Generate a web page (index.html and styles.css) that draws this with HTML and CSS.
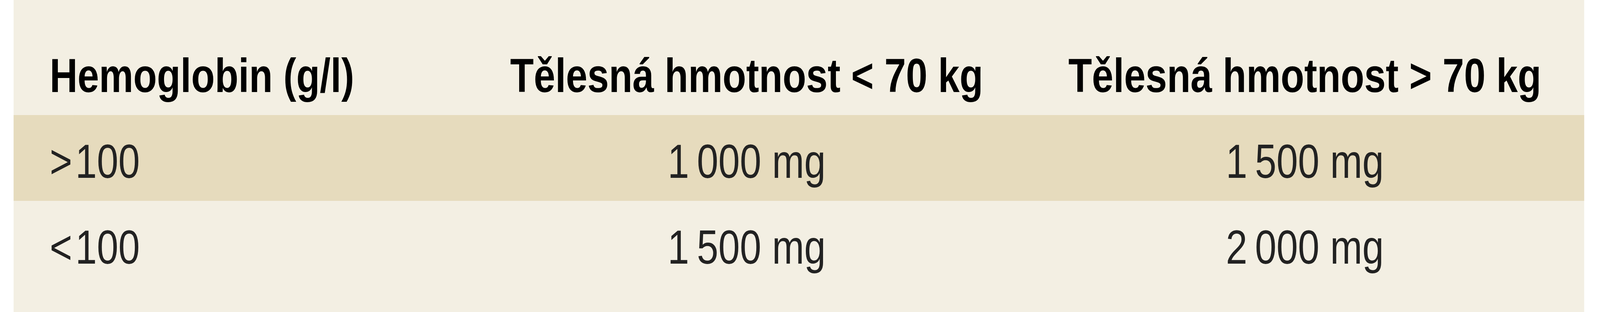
FILE: index.html
```html
<!DOCTYPE html>
<html lang="cs">
<head>
<meta charset="utf-8">
<title>Dávkování</title>
<link rel="stylesheet" href="styles.css">
</head>
<body>
<div class="frame">
  <div class="stage">
    <div class="panel">
      <div class="row head">
        <div class="cell first">Hemoglobin (g/l)</div>
        <div class="cell">Tělesná hmotnost &lt; 70 kg</div>
        <div class="cell">Tělesná hmotnost &gt; 70 kg</div>
      </div>
      <div class="row shade">
        <div class="cell first">&gt;&#8202;100</div>
        <div class="cell">1&#8201;000 mg</div>
        <div class="cell">1&#8201;500 mg</div>
      </div>
      <div class="row">
        <div class="cell first">&lt;&#8202;100</div>
        <div class="cell">1&#8201;500 mg</div>
        <div class="cell">2&#8201;000 mg</div>
      </div>
    </div>
  </div>
</div>
<script src="app.js"></script>
</body>
</html>
```
FILE: styles.css
```css
html, body {
  margin: 0;
  padding: 0;
  background: #ffffff;
  overflow: hidden;
}
body {
  font-family: "Liberation Sans", Arial, sans-serif;
}
.frame {
  width: 100%;
  height: 800px;
  overflow: hidden;
}
.stage {
  width: 5057px;
  height: 800px;
  transform-origin: 0 0;
  transform: scaleX(var(--sx, 0.80997));
}
.panel {
  margin: 0 50px 0 43px;
  width: 4964px;
  height: 800px;
  box-sizing: border-box;
  padding-top: 75px;
  background: #f3efe3;
}
.row {
  display: grid;
  grid-template-columns: 1436px 1762px 1766px;
  height: 220px;
}
.shade {
  background: #e6dbbd;
}
.cell {
  font-size: 122px;
  line-height: 202px;
  padding-top: 18px;
  text-align: center;
  color: #222222;
  white-space: nowrap;
}
.cell.first {
  text-align: left;
  padding-left: 114px;
}
.head .cell {
  font-weight: bold;
  color: #000000;
}
```
FILE: app.js
```js
document.documentElement.style.setProperty('--sx', String(window.innerWidth / 5057));
```
